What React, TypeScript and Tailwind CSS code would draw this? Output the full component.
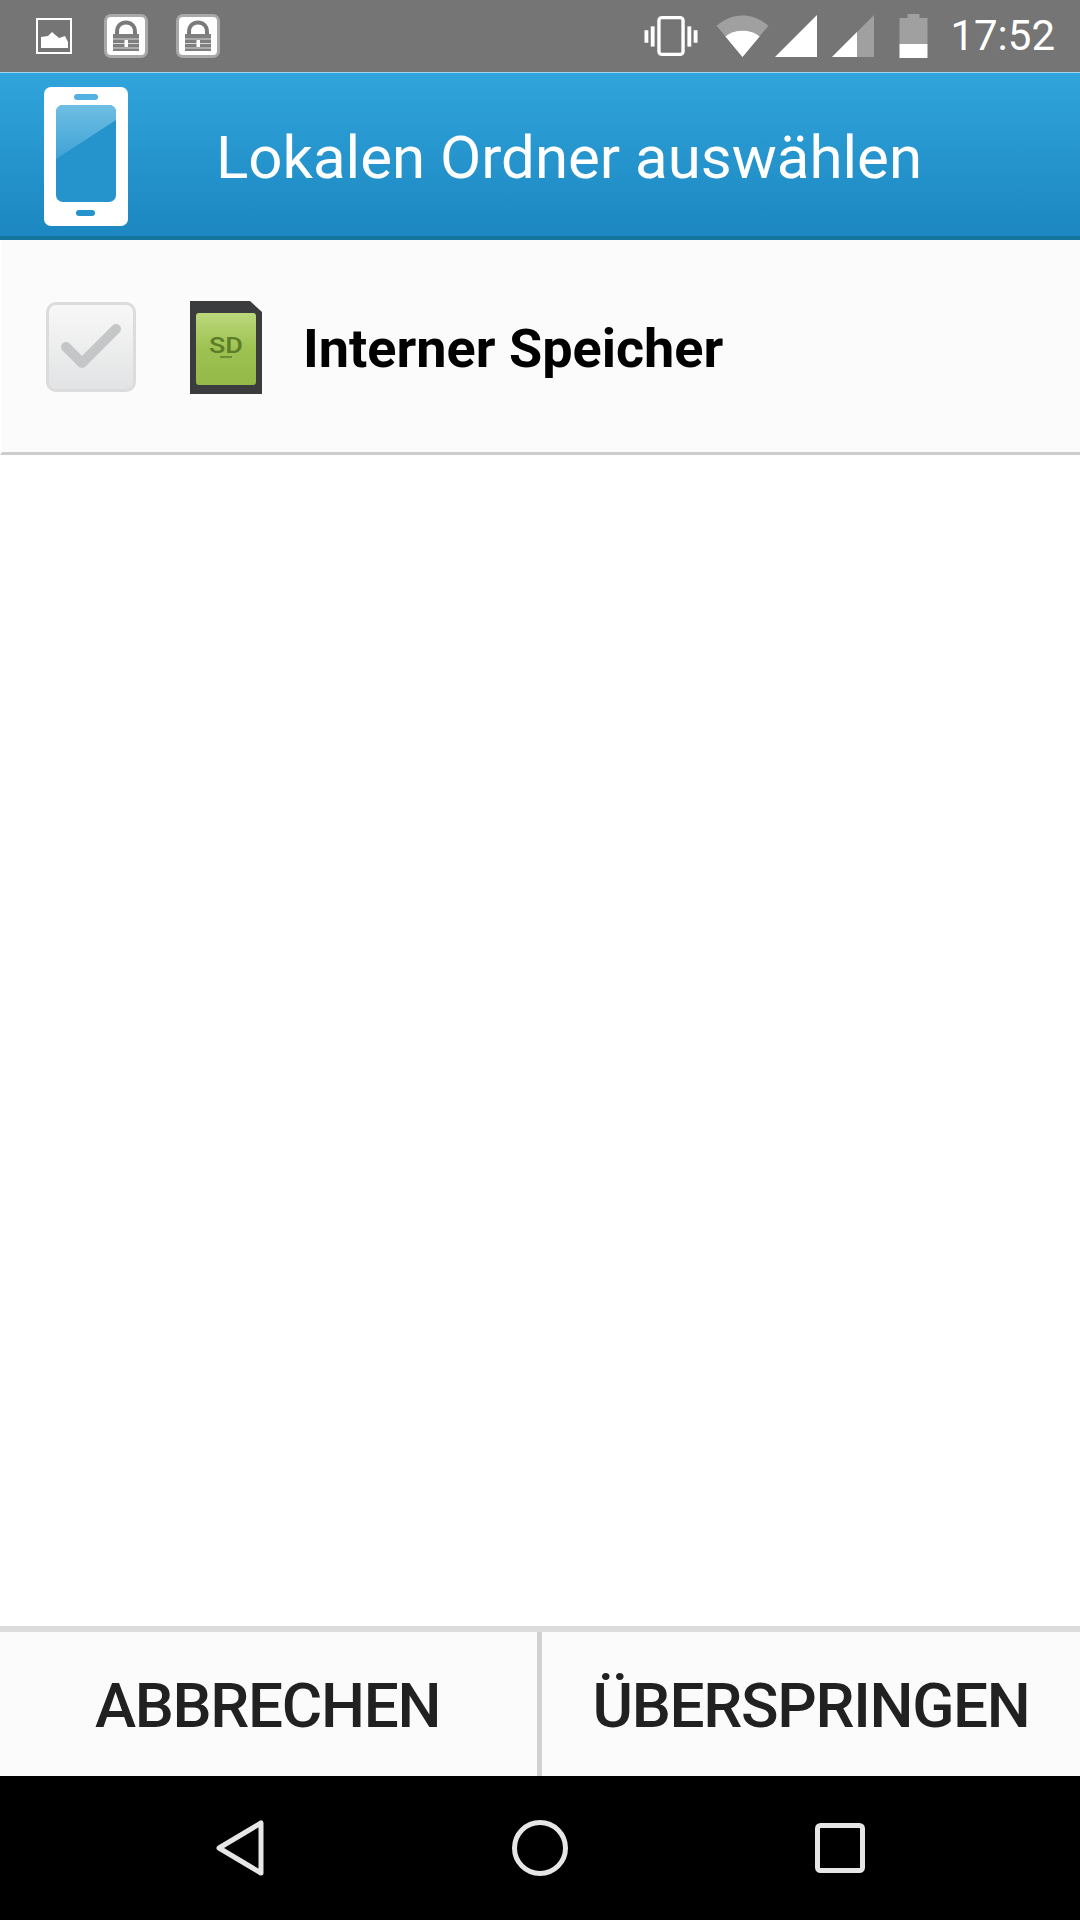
import React from 'react';

const LockIcon = () => (
  <div className="w-[44px] h-[44px] rounded-[7px] bg-white border-[3px] border-[#a9a9a9] flex items-center justify-center">
    <svg width="30" height="32" viewBox="0 0 30 32">
      <path d="M6 15V12C6 6 10 2.500 15 2.500S24 6 24 12V15" fill="none" stroke="#7a7a7a" strokeWidth="4" />
      <path d="M2 14H28V31H2Z" fill="#7f7f7f" />
      <path d="M2 19H28M2 23.500H28M2 28H28" stroke="#ffffff" strokeWidth="1" opacity="0.7" />
      <rect x="13.500" y="20" width="3.500" height="7" fill="#ffffff" />
    </svg>
  </div>
);

const StatusBar = () => (
  <div className="h-[72px] shrink-0 bg-[#757575] flex items-center justify-between pl-[36px] pr-[25px]">
    <div className="flex items-center">
      <svg width="36" height="36" viewBox="0 0 36 36">
        <rect x="1" y="1" width="34" height="34" fill="none" stroke="#ffffff" strokeWidth="2" />
        <path d="M5 30V19L12 18L16 14L23 20L29 18L32 24V30Z" fill="#ffffff" />
      </svg>
      <div className="ml-[32px]"><LockIcon /></div>
      <div className="ml-[28px]"><LockIcon /></div>
    </div>
    <div className="flex items-center">
      <svg width="54" height="42" viewBox="0 0 56 42">
        <rect x="15.500" y="2" width="25" height="38" rx="3" fill="none" stroke="#ffffff" strokeWidth="3.500" />
        <rect x="0.500" y="15" width="4" height="13" fill="#ffffff" />
        <rect x="7" y="11" width="4" height="21" fill="#ffffff" />
        <rect x="45" y="11" width="4" height="21" fill="#ffffff" />
        <rect x="51.500" y="15" width="4" height="13" fill="#ffffff" />
      </svg>
      <svg className="ml-[18px]" width="53" height="43" viewBox="0 0 54 44">
        <path d="M27 43L0.500 11C8 4.500 17 0.500 27 0.500S46 4.500 53.500 11Z" fill="#a0a0a0" />
        <path d="M27 43L9.500 22C14 18 20 16 27 16S40 18 44.500 22Z" fill="#ffffff" />
      </svg>
      <svg className="ml-[6px]" width="42" height="42" viewBox="0 0 42 42">
        <path d="M0 42L42 0V42Z" fill="#ffffff" />
      </svg>
      <svg className="ml-[15px]" width="42" height="42" viewBox="0 0 42 42">
        <path d="M0 42L42 0V42Z" fill="#a0a0a0" />
        <path d="M0 42L25 17V42Z" fill="#ffffff" />
      </svg>
      <svg className="ml-[25px]" width="29" height="44" viewBox="0 0 28 44">
        <path d="M0 4H8V0H20V4H28V30H0Z" fill="#a0a0a0" />
        <rect x="0" y="30" width="28" height="14" fill="#ffffff" />
      </svg>
      <span className="ml-[22px] text-white text-[42px] leading-none font-['Roboto',sans-serif]">17:52</span>
    </div>
  </div>
);

const Header = () => (
  <div className="h-[168px] shrink-0 border-t border-[#9fd3ee] border-b-[4px] border-b-[#14769f] bg-gradient-to-b from-[#30a4dc] to-[#1c87c0] flex items-center">
    <svg className="ml-[44px] mt-[4px] shrink-0" width="84" height="139" viewBox="0 0 84 139">
      <defs>
        <linearGradient id="phoneGlare" x1="0" y1="0" x2="0" y2="1">
          <stop offset="0" stopColor="#6fbee3" />
          <stop offset="1" stopColor="#3fa3d6" />
        </linearGradient>
      </defs>
      <rect width="84" height="139" rx="7" fill="#ffffff" />
      <rect x="30" y="7" width="24" height="6" rx="3" fill="#52b1e0" />
      <rect x="12" y="18" width="60" height="97" rx="7" fill="#2593cc" />
      <path d="M12 72V25C12 21 15 18 19 18H65C69 18 72 21 72 25V33Z" fill="url(#phoneGlare)" />
      <rect x="32" y="123" width="19" height="6" rx="3" fill="#2593cc" />
    </svg>
    <span className="ml-[88px] mt-[6px] text-white text-[60px] leading-none font-['Roboto',sans-serif]">Lokalen Ordner auswählen</span>
  </div>
);

const StorageRow = () => (
  <div className="h-[215px] shrink-0 bg-[#fbfbfb] border-l-2 border-white border-b-[3px] border-b-[#cdcdcd] flex items-center">
    <div className="ml-[44px] mt-[2px] w-[90px] h-[90px] rounded-[10px] border-[3px] border-[#dcdcdc] bg-gradient-to-b from-[#f8f8f8] to-[#e2e3e4] flex items-center justify-center">
      <svg width="62" height="50" viewBox="0 0 62 50">
        <path d="M6 25L22 41L56 7" fill="none" stroke="#c5c6c8" strokeWidth="10" strokeLinecap="round" strokeLinejoin="round" />
      </svg>
    </div>
    <svg className="ml-[53px] mt-[2px]" width="73" height="93" viewBox="0 0 73 93">
      <defs>
        <linearGradient id="sdFace" x1="0" y1="0" x2="0" y2="1">
          <stop offset="0" stopColor="#bcd87c" />
          <stop offset="0.5" stopColor="#9dc251" />
          <stop offset="1" stopColor="#94b948" />
        </linearGradient>
      </defs>
      <path d="M1 0H61L73 11V93H1Z" fill="#3a3c3e" />
      <rect x="7" y="12" width="60" height="72" rx="3" fill="url(#sdFace)" />
      <text x="37" y="52" textAnchor="middle" fontFamily="Roboto, sans-serif" fontWeight="500" fontSize="22" fill="#5c7d27" textLength="34" lengthAdjust="spacingAndGlyphs">SD</text>
      <rect x="31" y="55" width="12" height="2" fill="#6c8d37" />
    </svg>
    <span className="ml-[41px] mt-[5px] text-black text-[54px] leading-none font-bold font-['Roboto',sans-serif]">Interner Speicher</span>
  </div>
);

const Footer = () => (
  <div className="h-[150px] shrink-0 border-t-[6px] border-[#dcdcdc] bg-[#fbfbfb] flex">
    <div className="w-[537px] flex items-center justify-center pr-[2px] pt-[4px]">
      <span className="text-[#212121] text-[62px] leading-none tracking-[-1.3px] font-medium font-['Roboto',sans-serif]">ABBRECHEN</span>
    </div>
    <div className="w-[5px] bg-[#d2d2d2]" />
    <div className="flex-1 flex items-center justify-center pt-[4px]">
      <span className="text-[#212121] text-[62px] leading-none tracking-[-1.3px] font-medium font-['Roboto',sans-serif]">ÜBERSPRINGEN</span>
    </div>
  </div>
);

const NavBar = () => (
  <div className="h-[144px] shrink-0 bg-black flex items-center">
    <svg className="ml-[216px]" width="48" height="56" viewBox="0 0 48 56">
      <path d="M45 3V53L3 28Z" fill="none" stroke="#e6e6e6" strokeWidth="5" strokeLinejoin="round" />
    </svg>
    <svg className="ml-[248px]" width="56" height="56" viewBox="0 0 56 56">
      <circle cx="28" cy="28" r="25.500" fill="none" stroke="#e6e6e6" strokeWidth="5" />
    </svg>
    <svg className="ml-[247px]" width="50" height="50" viewBox="0 0 50 50">
      <rect x="2.500" y="2.500" width="45" height="45" rx="3" fill="none" stroke="#e6e6e6" strokeWidth="5" />
    </svg>
  </div>
);

export default function App() {
  return (
    <div className="w-[1080px] h-[1920px] flex flex-col bg-white overflow-hidden">
      <StatusBar />
      <Header />
      <StorageRow />
      <div className="flex-1" />
      <Footer />
      <NavBar />
    </div>
  );
}
